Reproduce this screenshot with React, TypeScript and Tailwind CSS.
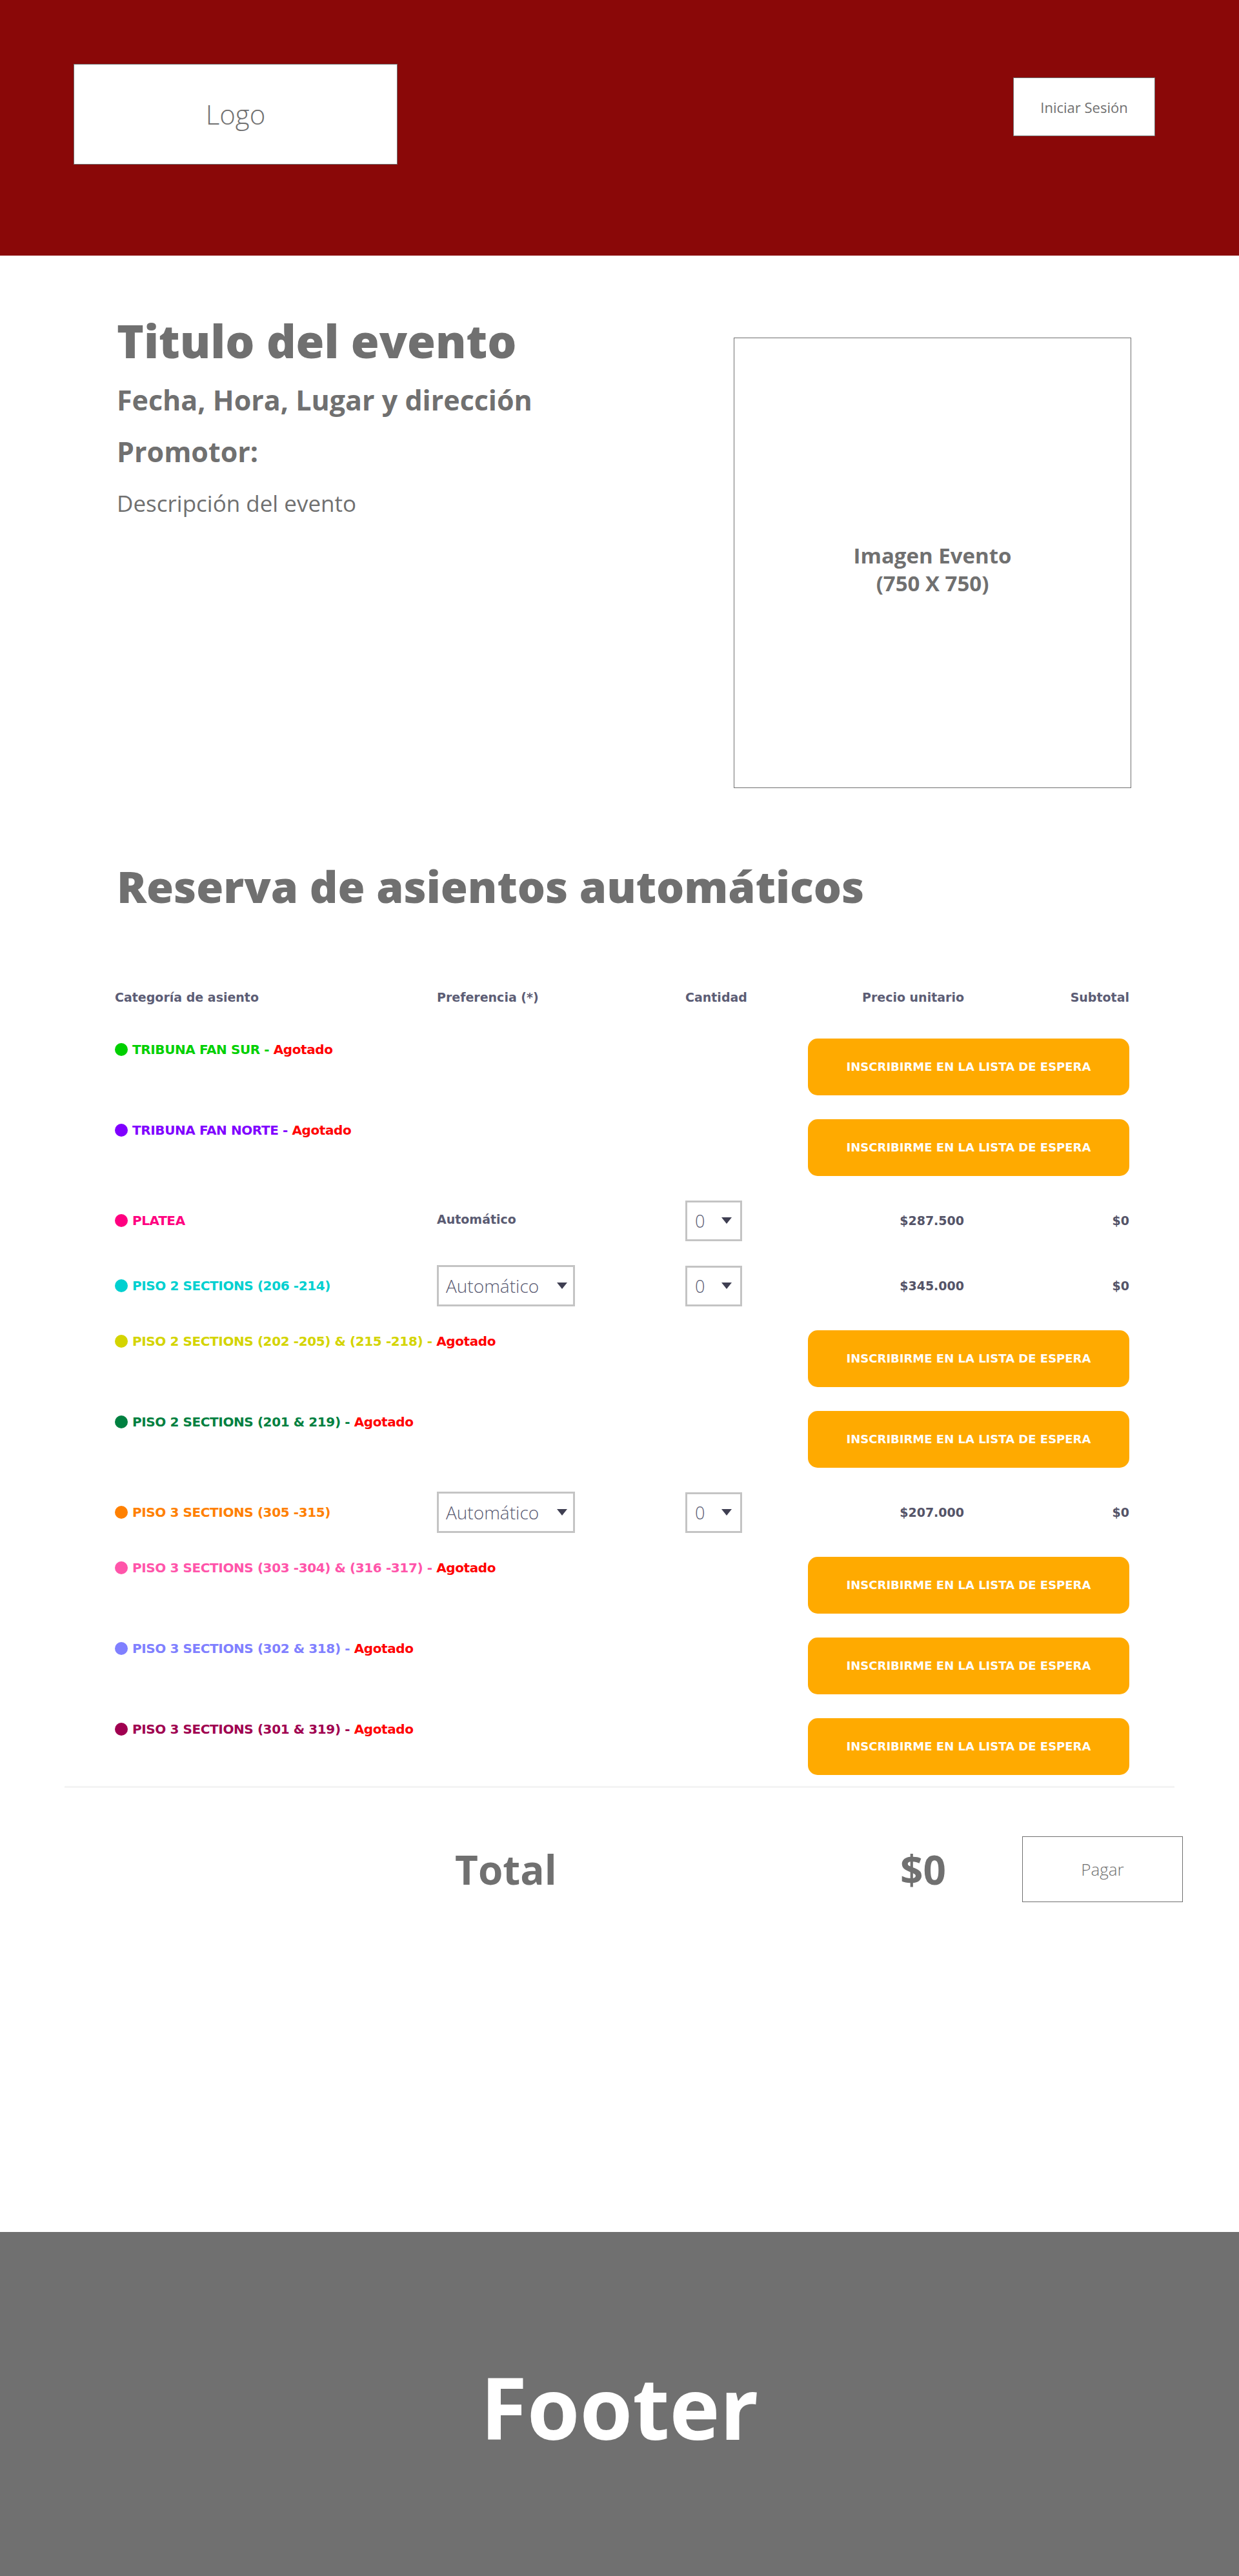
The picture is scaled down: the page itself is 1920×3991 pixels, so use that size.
type Row = {
  name: string;
  text: string;
  dot: string;
  soldOut?: boolean;
  pref?: "text" | "select";
  price?: string;
};

const rows: Row[] = [
  { name: "TRIBUNA FAN SUR", text: "text-[#00d000]", dot: "bg-[#00d000]", soldOut: true },
  { name: "TRIBUNA FAN NORTE", text: "text-[#8000ff]", dot: "bg-[#8000ff]", soldOut: true },
  { name: "PLATEA", text: "text-[#ff0080]", dot: "bg-[#ff0080]", pref: "text", price: "$287.500" },
  { name: "PISO 2 SECTIONS (206 -214)", text: "text-[#00d0d0]", dot: "bg-[#00d0d0]", pref: "select", price: "$345.000" },
  { name: "PISO 2 SECTIONS (202 -205) & (215 -218)", text: "text-[#d4d400]", dot: "bg-[#d4d400]", soldOut: true },
  { name: "PISO 2 SECTIONS (201 & 219)", text: "text-[#008040]", dot: "bg-[#008040]", soldOut: true },
  { name: "PISO 3 SECTIONS (305 -315)", text: "text-[#ff8000]", dot: "bg-[#ff8000]", pref: "select", price: "$207.000" },
  { name: "PISO 3 SECTIONS (303 -304) & (316 -317)", text: "text-[#ff55aa]", dot: "bg-[#ff55aa]", soldOut: true },
  { name: "PISO 3 SECTIONS (302 & 318)", text: "text-[#8080ff]", dot: "bg-[#8080ff]", soldOut: true },
  { name: "PISO 3 SECTIONS (301 & 319)", text: "text-[#a00050]", dot: "bg-[#a00050]", soldOut: true },
];

const grid = "grid grid-cols-[499px_385px_190px_242px_256px]";

function Caret() {
  return (
    <svg width="16" height="10" viewBox="0 0 16 10" className="shrink-0">
      <polygon points="0,0 16,0 8,10" fill="#3f3f52" />
    </svg>
  );
}

function Category({ row }: { row: Row }) {
  return (
    <div className={`flex items-center gap-[7px] ${row.soldOut ? "pt-[7px]" : ""}`}>
      <span className={`w-5 h-5 rounded-full shrink-0 ${row.dot}`} />
      <span className={`text-[20px] leading-none font-bold tracking-[-0.4px] whitespace-nowrap ${row.text}`}>
        {row.name}
        {row.soldOut && (
          <>
            <span> - </span>
            <span className="text-[#ff0000]">Agotado</span>
          </>
        )}
      </span>
    </div>
  );
}

function SeatRow({ row }: { row: Row }) {
  if (row.soldOut) {
    return (
      <div className={`${grid} items-start`}>
        <Category row={row} />
        <div />
        <div />
        <button className="col-span-2 h-[88px] rounded-[15px] bg-[#ffaa00] text-white text-[18px] font-bold leading-none">
          INSCRIBIRME EN LA LISTA DE ESPERA
        </button>
      </div>
    );
  }
  return (
    <div className={`${grid} items-center h-[64px]`}>
      <Category row={row} />
      <div>
        {row.pref === "text" ? (
          <span className="text-[19px] font-bold leading-none text-[#5a5b72]">Automático</span>
        ) : (
          <div className="w-[214px] h-[64px] border-[3px] border-[#c4c4c4] flex items-center justify-between pl-[11px] pr-[9px]">
            <span className="font-['Open_Sans',sans-serif] text-[28px] font-light leading-[34px] whitespace-nowrap text-[#5a5b72]">
              Automático
            </span>
            <Caret />
          </div>
        )}
      </div>
      <div>
        <div className="w-[88px] h-[63px] border-[3px] border-[#c4c4c4] flex items-center justify-between pl-[12px] pr-[13px]">
          <span className="font-['Open_Sans',sans-serif] text-[27px] font-light leading-none text-[#5a5b72]">0</span>
          <Caret />
        </div>
      </div>
      <div className="text-right text-[19px] font-bold leading-none text-[#545468]">{row.price}</div>
      <div className="text-right text-[19px] font-bold leading-none text-[#545468]">$0</div>
    </div>
  );
}

export default function App() {
  return (
    <div className="w-[1920px] bg-white font-['Open_Sans',sans-serif] text-[#707070]">
      <header className="h-[396px] bg-[#8a0808] flex justify-between items-start pl-[114px] pr-[130px]">
        <div className="mt-[99px] w-[502px] h-[156px] bg-white border border-[#707070] flex items-center justify-center">
          <span className="text-[42px] font-light leading-none">Logo</span>
        </div>
        <button className="mt-[120px] w-[220px] h-[91px] bg-white border border-[#707070] flex items-center justify-center text-[22px] leading-none">
          Iniciar Sesión
        </button>
      </header>

      <main className="h-[3062px] pt-[93px]">
        <div className="ml-[178px] w-[1575px]">
          <section className="flex justify-between items-start">
            <div className="flex flex-col pl-[3px]">
              <h1 className="text-[71px] font-extrabold leading-none pt-[3px]">Titulo del evento</h1>
              <p className="mt-[35px] text-[43px] font-bold leading-none">Fecha, Hora, Lugar y dirección</p>
              <p className="mt-[37px] text-[43px] font-bold leading-none">Promotor:</p>
              <p className="mt-[41px] text-[35px] font-normal leading-none">Descripción del evento</p>
            </div>
            <div className="mt-[34px] w-[616px] h-[698px] border border-[#707070] flex items-center justify-center pt-[20px]">
              <p className="text-center text-[33px] font-bold leading-[43px]">
                Imagen Evento
                <br />
                (750 X 750)
              </p>
            </div>
          </section>

          <h2 className="mt-[118px] pl-[3px] text-[68px] font-extrabold leading-none">Reserva de asientos automáticos</h2>

          <div className="font-['DejaVu_Sans',sans-serif]">
            <div className={`${grid} mt-[129px] text-[19px] font-bold leading-none text-[#5c5d75]`}>
              <span>Categoría de asiento</span>
              <span>Preferencia (*)</span>
              <span>Cantidad</span>
              <span className="text-right">Precio unitario</span>
              <span className="text-right">Subtotal</span>
            </div>
            <div className="mt-[54px] flex flex-col gap-[37px]">
              {rows.map((r) => (
                <SeatRow key={r.name} row={r} />
              ))}
            </div>
          </div>
        </div>

        <hr className="mt-[17px] ml-[100px] w-[1720px] border-0 h-[3px] bg-[#f4f4f4]" />

        <div className="mt-[75px] grid grid-cols-[705px_690px_189px_249px] items-center">
          <div />
          <span className="text-[62px] font-bold leading-none">Total</span>
          <span className="text-[62px] font-bold leading-none">$0</span>
          <button className="h-[102px] bg-white border border-[#707070] text-[26px] font-light leading-none">
            Pagar
          </button>
        </div>
      </main>

      <footer className="h-[533px] bg-[#707070] flex items-center justify-center pt-[8px]">
        <span className="text-[132px] font-bold leading-none text-white">Footer</span>
      </footer>
    </div>
  );
}
